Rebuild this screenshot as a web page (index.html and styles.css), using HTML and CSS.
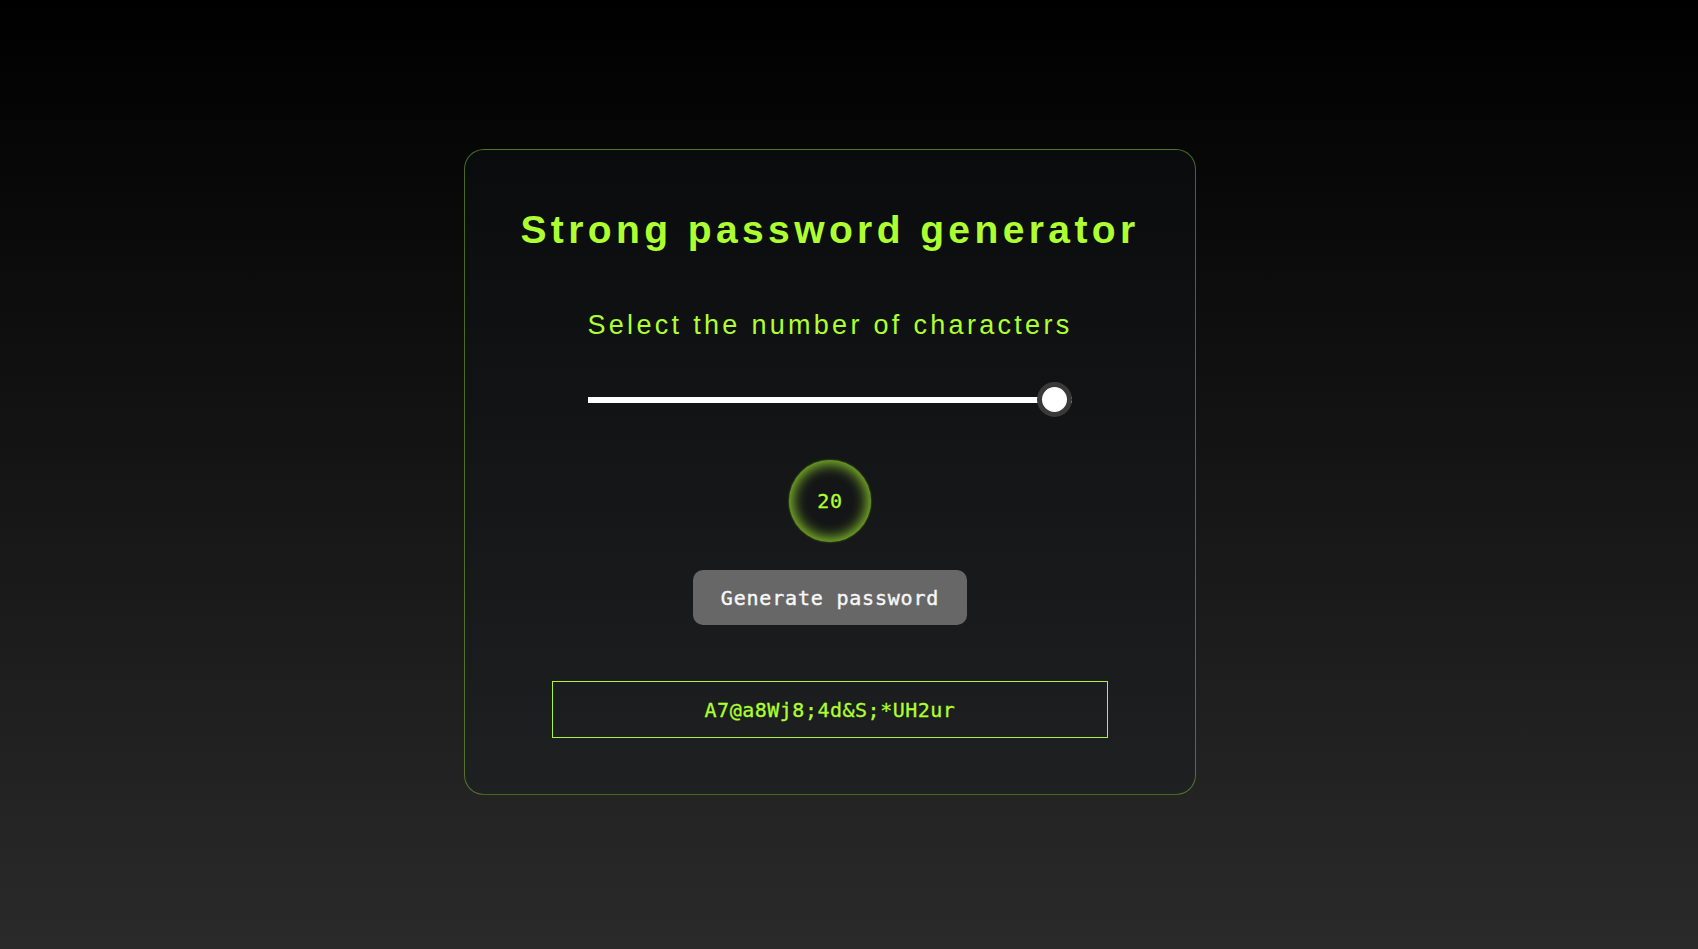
FILE: index.html
```html
<!DOCTYPE html>
<html lang="en">
<head>
<meta charset="utf-8">
<title>Strong password generator</title>
<link rel="stylesheet" href="styles.css">
</head>
<body>
<main class="page">
  <section class="card">
    <h1 class="title">Strong password generator</h1>
    <p class="subtitle">Select the number of characters</p>
    <input class="slider" type="range" min="8" max="20" value="20">
    <div class="count">20</div>
    <button class="generate" type="button">Generate password</button>
    <div class="output">A7@a8Wj8;4d&amp;S;*UH2ur</div>
  </section>
</main>
</body>
</html>
```

FILE: styles.css
```css
html {
  height: 100%;
}

body {
  margin: 0;
  min-height: 100vh;
  background: linear-gradient(to bottom, #000000 0%, #2a2a2a 100%);
  font-family: "Liberation Sans", Arial, sans-serif;
}

.page {
  display: flex;
  justify-content: center;
  padding: 149px 38px 0 0;
}

.card {
  box-sizing: border-box;
  width: 732px;
  padding: 57px 0 56px;
  display: flex;
  flex-direction: column;
  align-items: center;
  border: 1px solid rgba(173, 255, 47, 0.38);
  border-radius: 20px;
  background: linear-gradient(to bottom, #0a0b0d 0%, #1f2022 100%);
}

.title {
  margin: 0;
  font-size: 39px;
  line-height: 46px;
  font-weight: 700;
  letter-spacing: 4.4px;
  color: #adff2f;
  white-space: nowrap;
}

.subtitle {
  margin: 56px 0 0;
  font-size: 27px;
  line-height: 32px;
  font-weight: 400;
  letter-spacing: 3.3px;
  color: #adff2f;
  white-space: nowrap;
}

.slider {
  -webkit-appearance: none;
  appearance: none;
  margin: 41px 0 0;
  width: 484px;
  height: 35px;
  background: transparent;
  outline: none;
}

.slider::-webkit-slider-runnable-track {
  height: 6px;
  background: #ffffff;
  border: none;
}

.slider::-webkit-slider-thumb {
  -webkit-appearance: none;
  appearance: none;
  box-sizing: border-box;
  width: 35px;
  height: 35px;
  margin-top: -14.5px;
  border-radius: 50%;
  background: #ffffff;
  border: 5px solid #393939;
}

.count {
  margin-top: 43px;
  width: 82px;
  height: 82px;
  border-radius: 50%;
  display: flex;
  align-items: center;
  justify-content: center;
  background: #141517;
  box-shadow: inset 0 0 14px 3px rgba(173, 255, 47, 0.78), 0 0 2px rgba(173, 255, 47, 0.5);
  font-family: "DejaVu Sans Mono", "Liberation Mono", monospace;
  font-size: 20px;
  letter-spacing: 0.8px;
  color: #adff2f;
  -webkit-text-stroke: 0.3px #adff2f;
}

.generate {
  margin-top: 28px;
  width: 274px;
  height: 55px;
  border: none;
  border-radius: 10px;
  background: #676767;
  color: #f7f7f7;
  font-family: "DejaVu Sans Mono", "Liberation Mono", monospace;
  font-size: 20px;
  letter-spacing: 0.8px;
  -webkit-text-stroke: 0.4px #f7f7f7;
  cursor: pointer;
}

.output {
  box-sizing: border-box;
  margin-top: 56px;
  width: 556px;
  height: 57px;
  display: flex;
  align-items: center;
  justify-content: center;
  border: 1px solid #a8f53a;
  color: #adff2f;
  font-family: "DejaVu Sans Mono", "Liberation Mono", monospace;
  font-size: 20px;
  letter-spacing: 0.5px;
  -webkit-text-stroke: 0.3px #adff2f;
}
```
